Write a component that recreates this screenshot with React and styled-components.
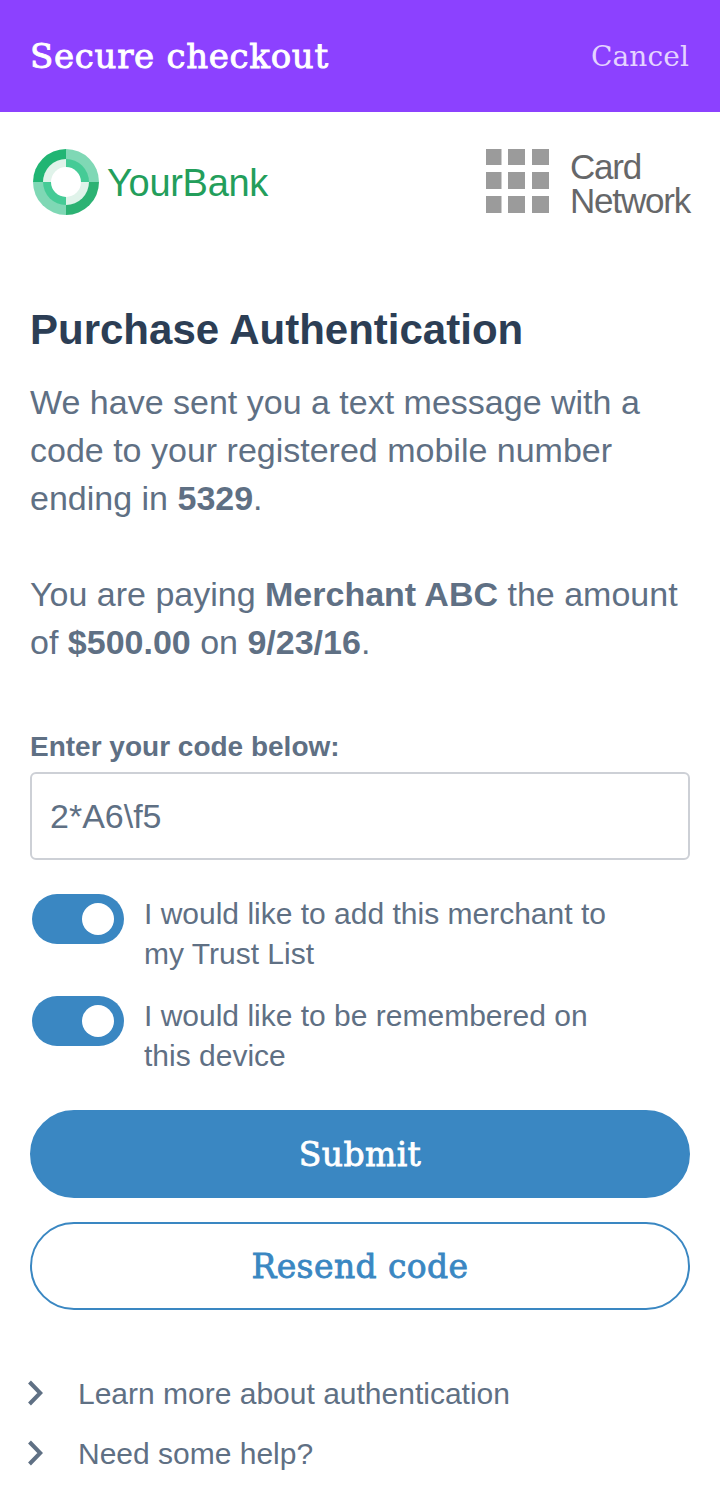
import React from 'react'
import styled, { createGlobalStyle } from 'styled-components'

const GlobalStyle = createGlobalStyle`
    html, body {
        margin: 0;
        padding: 0;
        background: #fff;
    }
    * {
        box-sizing: border-box;
    }
`

const slab = `"DejaVu Serif", "Liberation Serif", serif`
const sans = `"Liberation Sans", Arial, sans-serif`

const Page = styled.div`
    width: 720px;
    height: 1508px;
    overflow: hidden;
    background: #fff;
    font-family: ${sans};
    color: #5f7084;
`

const Header = styled.header`
    height: 112px;
    padding: 0 31px 0 30px;
    background: #8c41ff;
    display: flex;
    align-items: center;
    justify-content: space-between;
    font-family: ${slab};
    color: #fff;
`

const HeaderTitle = styled.div`
    font-size: 34px;
    -webkit-text-stroke: 0.9px #fff;
    letter-spacing: 0.7px;
`

const CancelLink = styled.a`
    font-size: 28px;
    letter-spacing: 0.1px;
    color: #e4d3ff;
`

const LogoRow = styled.div`
    height: 68px;
    margin-top: 36px;
    padding: 0 30px 0 32px;
    display: flex;
    align-items: center;
    justify-content: space-between;
`

const Logo = styled.div`
    display: flex;
    align-items: center;
`

const BankName = styled.span`
    margin-left: 7px;
    padding-top: 2px;
    font-size: 38px;
    letter-spacing: -0.3px;
    color: #239e5b;
`

const NetworkName = styled.span`
    margin-left: 20px;
    padding-top: 4px;
    font-size: 35px;
    line-height: 34px;
    letter-spacing: -1.2px;
    color: #666769;
`

const Content = styled.main`
    padding: 0 30px;
`

const Title = styled.h1`
    margin: 90px 0 0;
    font-size: 42px;
    line-height: 48px;
    font-weight: 700;
    color: #2c3e55;
`

const Paragraph = styled.p`
    margin: ${({first}) => (first ? '24px' : '48px')} 0 0;
    font-size: 34px;
    line-height: 48px;
    b {
        font-weight: 700;
    }
`

const Label = styled.label`
    display: block;
    margin-top: 63px;
    font-size: 28px;
    line-height: 36px;
    font-weight: 700;
`

const CodeInput = styled.div`
    height: 88px;
    margin-top: 7px;
    padding: 0 18px;
    display: flex;
    align-items: center;
    border: 2px solid #cdd0d6;
    border-radius: 6px;
    font-size: 34px;
`

const Options = styled.div`
    margin-top: 34px;
    display: flex;
    flex-direction: column;
    gap: 22px;
`

const Option = styled.div`
    display: flex;
    padding-left: 2px;
    font-size: 30px;
    line-height: 40px;
`

const Toggle = styled.span`
    position: relative;
    flex: none;
    width: 92px;
    height: 50px;
    margin-right: 20px;
    border-radius: 25px;
    background: #3a87c2;
    &::after {
        content: '';
        position: absolute;
        top: 9px;
        right: 10px;
        width: 32px;
        height: 32px;
        border-radius: 50%;
        background: #fff;
    }
`

const Button = styled.button`
    display: block;
    width: 100%;
    height: 88px;
    padding: 0;
    border: 2px solid #3a87c2;
    border-radius: 44px;
    background: ${({outline}) => (outline ? '#fff' : '#3a87c2')};
    color: ${({outline}) => (outline ? '#3a87c2' : '#fff')};
    font-family: ${slab};
    font-size: 33px;
    letter-spacing: 0.4px;
    -webkit-text-stroke: 0.8px ${({outline}) => (outline ? '#3a87c2' : '#fff')};
`

const Buttons = styled.div`
    margin-top: 34px;
    display: flex;
    flex-direction: column;
    gap: 24px;
`

const Links = styled.div`
    margin-top: 64px;
    display: flex;
    flex-direction: column;
    gap: 20px;
`

const LinkRow = styled.a`
    display: flex;
    align-items: center;
    height: 40px;
    font-size: 30px;
    svg {
        flex: none;
        margin: 0 33px 0 -3px;
    }
`

const BankLogo = () => (
    <svg width="68" height="68" viewBox="0 0 68 68">
        <path d="M34 1a33 33 0 0 0-33 33h33z" fill="#20b573" />
        <path d="M34 1a33 33 0 0 1 33 33h-33z" fill="#7fd8b5" />
        <path d="M1 34a33 33 0 0 0 33 33v-33z" fill="#7fd8b5" />
        <path d="M67 34a33 33 0 0 1-33 33v-33z" fill="#2cb273" />
        <path d="M34 11a23 23 0 0 0-23 23h23z" fill="#e0f3ea" />
        <path d="M34 11a23 23 0 0 1 23 23h-23z" fill="#45cb96" />
        <path d="M11 34a23 23 0 0 0 23 23v-23z" fill="#45cb96" />
        <path d="M57 34a23 23 0 0 1-23 23v-23z" fill="#e0f3ea" />
        <circle cx="34" cy="34" r="15" fill="#fff" />
    </svg>
)

const NetworkLogo = () => (
    <svg width="64" height="66" viewBox="0 1 64 66" fill="#9b9b9b">
        {[0, 24, 48].map((y) =>
            [0, 22, 46].map((x) => (
                <rect key={`${x}-${y}`} x={x} y={y} width={x === 0 ? 15.5 : 17} height="17" />
            ))
        )}
    </svg>
)

const Chevron = () => (
    <svg width="18" height="28" viewBox="0 0 18 28" fill="none" stroke="#5f7084" strokeWidth="4">
        <polyline points="2.5,2 13.2,13 2.5,24" />
    </svg>
)

const App = () => {
    return (
        <Page>
            <GlobalStyle />
            <Header>
                <HeaderTitle>Secure checkout</HeaderTitle>
                <CancelLink>Cancel</CancelLink>
            </Header>
            <LogoRow>
                <Logo>
                    <BankLogo />
                    <BankName>YourBank</BankName>
                </Logo>
                <Logo>
                    <NetworkLogo />
                    <NetworkName>Card<br />Network</NetworkName>
                </Logo>
            </LogoRow>
            <Content>
                <Title>Purchase Authentication</Title>
                <Paragraph first>
                    We have sent you a text message with a code to your registered mobile number ending in <b>5329</b>.
                </Paragraph>
                <Paragraph>
                    You are paying <b>Merchant ABC</b> the amount of <b>$500.00</b> on <b>9/23/16</b>.
                </Paragraph>
                <Label>Enter your code below:</Label>
                <CodeInput>2*A6\f5</CodeInput>
                <Options>
                    <Option>
                        <Toggle />
                        <span>I would like to add this merchant to<br />my Trust List</span>
                    </Option>
                    <Option>
                        <Toggle />
                        <span>I would like to be remembered on<br />this device</span>
                    </Option>
                </Options>
                <Buttons>
                    <Button>Submit</Button>
                    <Button outline>Resend code</Button>
                </Buttons>
                <Links>
                    <LinkRow><Chevron />Learn more about authentication</LinkRow>
                    <LinkRow><Chevron />Need some help?</LinkRow>
                </Links>
            </Content>
        </Page>
    )
}

export default App
